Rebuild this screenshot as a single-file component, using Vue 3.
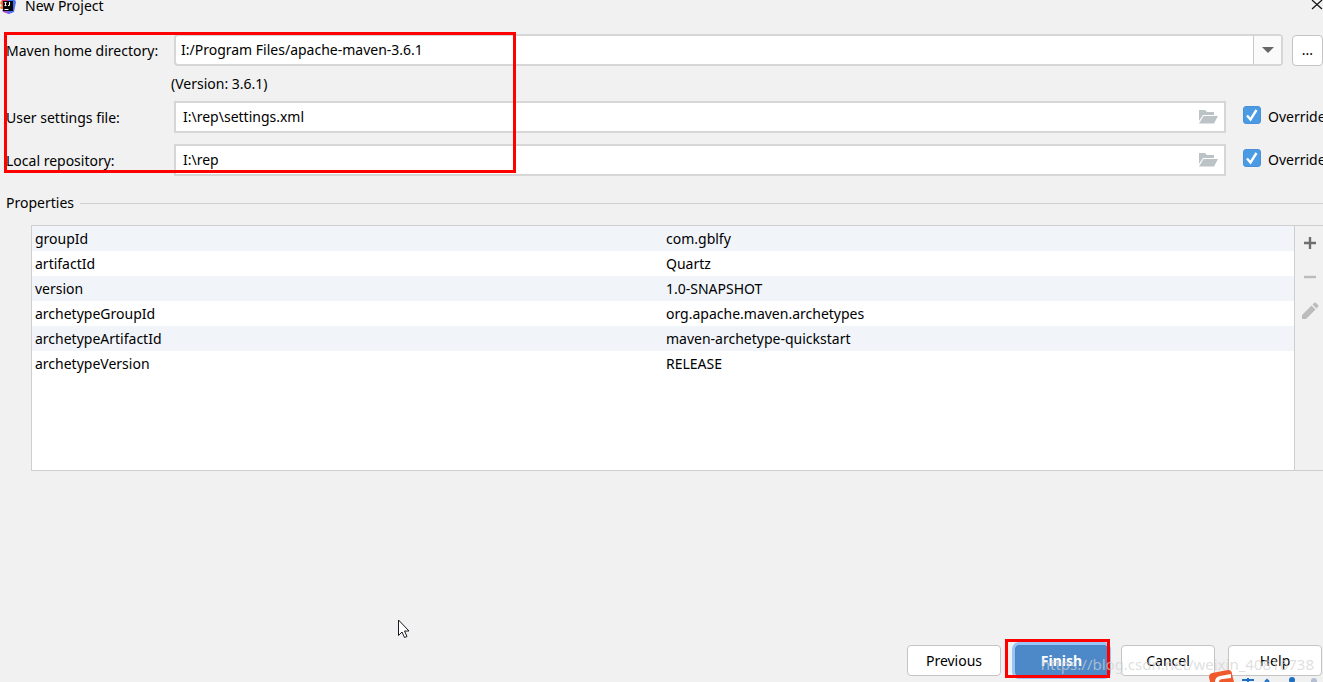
<script setup>
import { ref } from 'vue'

const mavenHome = ref('I:/Program Files/apache-maven-3.6.1')
const files = ref([
  { id: 'settings', label: 'User settings file:', value: 'I:\\rep\\settings.xml', override: true },
  { id: 'repository', label: 'Local repository:', value: 'I:\\rep', override: true }
])
const properties = [
  ['groupId', 'com.gblfy'],
  ['artifactId', 'Quartz'],
  ['version', '1.0-SNAPSHOT'],
  ['archetypeGroupId', 'org.apache.maven.archetypes'],
  ['archetypeArtifactId', 'maven-archetype-quickstart'],
  ['archetypeVersion', 'RELEASE']
]
</script>

<template>
  <main class="dialog">
    <header class="titlebar">
      <svg class="logo" width="16" height="16" viewBox="0 0 16 16" aria-hidden="true">
        <path d="M0 5 3 0h5L4 11H1l-1-2 2-1z" fill="#fb7a35" />
        <path d="M2 0h7l2 3-8 8z" fill="#ee2f78" />
        <path d="M9 0h5l2 4-2 10-5 2-6-3 1-4z" fill="#4b70f5" />
        <path d="M2 12l6 1 1 3-6-2z" fill="#a34ddc" />
        <path d="M3 3h10v10H3z" fill="#080808" />
        <path d="M4.500 4.500h2M5.500 4.500v3M4.500 7.500h2M9.500 4v3.500H8M4.500 11.500h4" fill="none" stroke="#fff" />
      </svg>
      <h1>New Project</h1>
      <button class="close" type="button" aria-label="Close">
        <svg width="12" height="12" viewBox="0 0 12 12"><path d="M1 0l10 9M11 0 1 9" stroke="#111" stroke-width="1.200" /></svg>
      </button>
    </header>

    <section class="form">
      <div class="row">
        <label for="maven-home">Maven home directory:</label>
        <div class="combo">
          <select id="maven-home" v-model="mavenHome">
            <option>I:/Program Files/apache-maven-3.6.1</option>
          </select>
          <span class="arrow" aria-hidden="true">
            <svg width="12" height="6" viewBox="0 0 12 6"><path d="M0 0h12L6 6z" fill="#666" /></svg>
          </span>
        </div>
        <button class="button browse" type="button">...</button>
      </div>
      <p class="version">(Version: 3.6.1)</p>
      <div v-for="file in files" :key="file.id" class="row">
        <label :for="file.id">{{ file.label }}</label>
        <div class="path">
          <input :id="file.id" v-model="file.value" type="text" />
          <button class="folder" type="button" aria-label="Browse">
            <svg width="20" height="16" viewBox="0 0 20 16">
              <path d="M1 1h6l2 2h7v3H5L1 12z" fill="#bcc3c7" />
              <path d="M5.500 7H20l-4 7.500H1z" fill="#bcc3c7" />
            </svg>
          </button>
        </div>
        <label class="override">
          <span class="check">
            <input v-model="file.override" type="checkbox" />
            <svg v-if="file.override" width="18" height="18" viewBox="0 0 18 18" aria-hidden="true"><path d="M4 9.500l3.500 4L13.500 4" fill="none" stroke="#fff" stroke-width="2.400" /></svg>
          </span>
          Override
        </label>
      </div>
      <div class="annotation fields-mark"></div>
    </section>

    <h2 class="heading">Properties</h2>

    <section class="properties">
      <div class="table-area">
        <table aria-label="Properties">
          <tbody>
            <tr v-for="item in properties" :key="item[0]">
              <td>{{ item[0] }}</td>
              <td>{{ item[1] }}</td>
            </tr>
          </tbody>
        </table>
      </div>
      <div class="tools">
        <button type="button" aria-label="Add">
          <svg width="18" height="18" viewBox="0 0 18 18"><path d="M9 3v12M3 9h12" stroke="#6e6e6e" stroke-width="2.400" /></svg>
        </button>
        <button type="button" aria-label="Remove">
          <svg width="18" height="18" viewBox="0 0 18 18"><path d="M3 9h12" stroke="#bcbcbc" stroke-width="2.400" /></svg>
        </button>
        <button type="button" aria-label="Edit">
          <svg width="18" height="18" viewBox="0 0 18 18"><path d="M1 17v-4L10.500 3.500l4 4L5 17zM11.500 2.500 13 1q1-1 2 0l2 2q1 1 0 2l-1.500 1.500z" fill="#bcbcbc" /></svg>
        </button>
      </div>
    </section>

    <footer class="actions">
      <button class="button" type="button">Previous</button>
      <span class="finish">
        <button class="button primary" type="button">Finish</button>
        <span class="annotation finish-mark"></span>
      </span>
      <button class="button" type="button">Cancel</button>
      <button class="button" type="button">Help</button>
    </footer>

    <span class="watermark">https://blog.csdn.net/weixin_40816738</span>

    <svg class="ime" width="116" height="12" viewBox="0 0 116 12" aria-hidden="true">
      <path d="M1 7q0-3 3-4L20 0q4 0 4 4l2 8H2z" fill="#f0592b" />
      <path d="M23 4 12 6q-5 1-5 6h4q0-3 4-3l8-1z" fill="#fff" />
      <path d="M34 10h12M40 8v4M57 12l2-2 2 2" fill="none" stroke="#1c6fc4" stroke-width="2" />
      <circle cx="84" cy="10" r="3" fill="#1c6fc4" />
      <circle cx="106" cy="11" r="3" fill="#b4bfd4" />
    </svg>

    <svg class="pointer" width="14" height="20" viewBox="0 0 14 20" aria-hidden="true">
      <path d="M1.500 1v15.500l3.500-3.500 2.500 5.500 2.500-1-2.500-5.500h4.500z" fill="#fff" stroke="#1a1a26" />
    </svg>
  </main>
</template>

<style>
body {
  margin: 0;
}
</style>

<style scoped>
.dialog {
  position: relative;
  display: flex;
  flex-direction: column;
  box-sizing: border-box;
  min-height: 100vh;
  overflow: hidden;
  background: #f1f1f1;
  color: #000;
  font: 14px/20px "Noto Sans", "Open Sans", sans-serif;
}
.dialog * {
  box-sizing: border-box;
}
button,
input,
select {
  margin: 0;
  padding: 0;
  font: inherit;
  color: inherit;
}
svg {
  display: block;
}
.titlebar {
  display: flex;
  align-items: center;
  height: 12px;
  gap: 9px;
}
.titlebar h1 {
  flex: 1;
  margin: 0;
  font-size: 14px;
  font-weight: 400;
}
.close {
  border: 0;
  background: none;
}
.form {
  position: relative;
  padding-top: 22px;
}
.row {
  display: flex;
  align-items: center;
  height: 32px;
  padding-left: 6px;
}
.row + .row {
  margin-top: 11px;
}
.row > label:first-child {
  flex: 0 0 168px;
  padding-top: 1px;
}
.combo {
  display: grid;
  flex: 1;
  height: 32px;
}
.combo select {
  grid-area: 1 / 1;
  appearance: none;
  padding: 0 5px 1px;
  border: 2px solid #d6d6d6;
  border-radius: 4px;
  background: #fff;
}
.arrow {
  grid-area: 1 / 1;
  justify-self: end;
  display: grid;
  place-items: center;
  width: 28px;
  margin: 2px;
  border-left: 1px solid #c8c8c8;
  background: #fafafa;
  pointer-events: none;
}
.button {
  width: 94px;
  height: 31px;
  border: 1px solid #c4c4c4;
  border-radius: 4px;
  background: #fff;
}
.browse {
  width: 31px;
  margin: 0 0 0 9px;
}
.version {
  margin: 8px 0 7px 171px;
}
.path {
  display: flex;
  align-items: center;
  flex: 1;
  height: 32px;
  border: 2px solid #d6d6d6;
  background: #fff;
}
.path input {
  flex: 1;
  min-width: 0;
  height: 28px;
  padding: 0 0 1px 7px;
  border: 0;
  outline: 0;
  background: none;
}
.folder {
  margin-right: 6px;
  border: 0;
  background: none;
}
.override {
  display: flex;
  align-items: center;
  flex: 0 0 80px;
  min-width: 0;
  gap: 7px;
  margin-left: 17px;
  white-space: nowrap;
}
.check {
  display: grid;
  flex: none;
  width: 18px;
  height: 18px;
  margin-bottom: 4px;
}
.check input {
  grid-area: 1 / 1;
  appearance: none;
  border: 1px solid #4a90d9;
  border-radius: 3px;
  background: #fff;
}
.check input:checked {
  background: #4a9be3;
}
.check svg {
  grid-area: 1 / 1;
  z-index: 1;
  pointer-events: none;
}
.annotation {
  position: absolute;
  border: 3px solid #f00;
  pointer-events: none;
}
.fields-mark {
  top: 20px;
  bottom: 3px;
  left: 4px;
  width: 512px;
}
.heading {
  display: flex;
  align-items: center;
  gap: 6px;
  margin: 17px 0 12px 6px;
  font-size: 14px;
  font-weight: 400;
}
.heading::after {
  content: "";
  flex: 1;
  height: 1px;
  background: #d0d0d0;
}
.properties {
  display: flex;
  height: 246px;
  margin-left: 31px;
  border: 1px solid #cfcfcf;
  border-right: 0;
}
.table-area {
  flex: 1;
  border-right: 1px solid #cfcfcf;
  background: #fff;
}
table {
  width: 100%;
  border-collapse: collapse;
  table-layout: fixed;
}
td {
  height: 25px;
  padding: 0 3px;
}
tr:nth-child(odd) {
  background: #f1f5fa;
}
.tools {
  display: flex;
  flex-direction: column;
  align-items: center;
  gap: 16px;
  width: 28px;
  padding: 8px 0 0 2px;
}
.tools button {
  border: 0;
  background: none;
}
.actions {
  display: flex;
  justify-content: flex-end;
  margin-top: auto;
  padding: 0 1px 6px 0;
}
.actions > .button + .button {
  margin-left: 13px;
}
.finish {
  position: relative;
  margin: 0 13px 0 14px;
}
.primary {
  width: 93px;
  border-color: #4a86c5;
  background: #4d89c8;
  box-shadow: 0 0 0 3px #9ac4f5;
  color: #fff;
  font-weight: 700;
}
.finish-mark {
  inset: -6px -2px -2px -10px;
}
.watermark {
  position: absolute;
  right: 9px;
  bottom: 8px;
  color: rgba(210, 210, 210, 0.7);
  font-size: 15px;
  pointer-events: none;
}
.ime {
  position: absolute;
  right: -1px;
  bottom: 0;
}
.pointer {
  position: absolute;
  top: 619px;
  left: 397px;
}
</style>
